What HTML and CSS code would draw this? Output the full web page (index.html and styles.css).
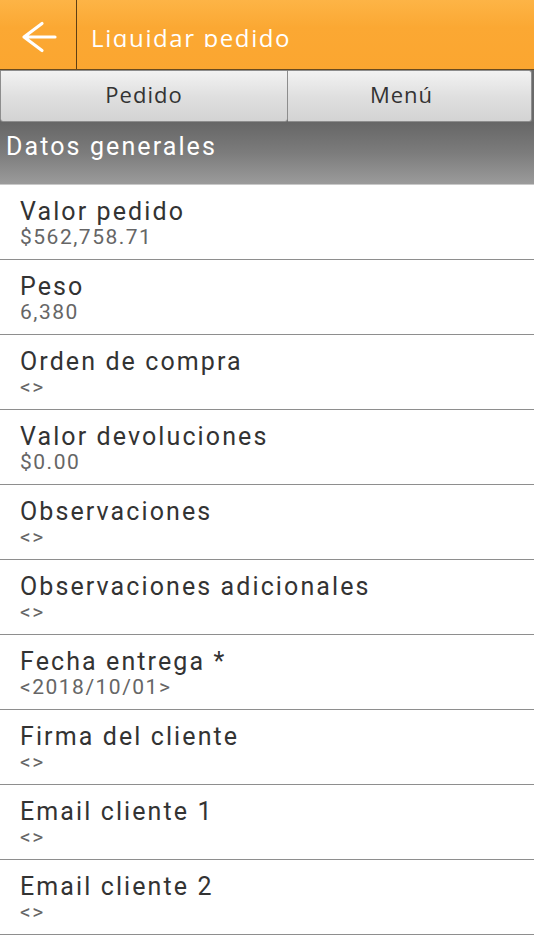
FILE: index.html
```html
<!DOCTYPE html>
<html lang="es">
<head>
    <meta charset="UTF-8">
    <meta name="viewport" content="width=device-width, initial-scale=1.0">
    <title>Liquidar pedido</title>
    <link rel="stylesheet" href="styles.css">
</head>
<body>
    <div class="topbar">
        <div class="back">
            <svg width="37" height="32" viewBox="0 0 37 32">
                <path d="M3 16 H34 M21 2.5 L3 16 L21 29.5" fill="none" stroke="#fff" stroke-width="3.2" stroke-linecap="round" stroke-linejoin="round"/>
            </svg>
        </div>
        <div class="title"><span>Liquidar pedido</span></div>
    </div>

    <div class="tabs">
        <div class="tab">Pedido</div>
        <div class="tab">Menú</div>
    </div>

    <div class="section">Datos generales</div>

    <div class="list">
        <div class="item">
            <div class="label">Valor pedido</div>
            <div class="value">$562,758.71</div>
        </div>
        <div class="item">
            <div class="label">Peso</div>
            <div class="value">6,380</div>
        </div>
        <div class="item">
            <div class="label">Orden de compra</div>
            <div class="value">&lt;&gt;</div>
        </div>
        <div class="item">
            <div class="label">Valor devoluciones</div>
            <div class="value">$0.00</div>
        </div>
        <div class="item">
            <div class="label">Observaciones</div>
            <div class="value">&lt;&gt;</div>
        </div>
        <div class="item">
            <div class="label">Observaciones adicionales</div>
            <div class="value">&lt;&gt;</div>
        </div>
        <div class="item">
            <div class="label">Fecha entrega *</div>
            <div class="value">&lt;2018/10/01&gt;</div>
        </div>
        <div class="item">
            <div class="label">Firma del cliente</div>
            <div class="value">&lt;&gt;</div>
        </div>
        <div class="item">
            <div class="label">Email cliente 1</div>
            <div class="value">&lt;&gt;</div>
        </div>
        <div class="item">
            <div class="label">Email cliente 2</div>
            <div class="value">&lt;&gt;</div>
        </div>
    </div>
</body>
</html>
```

FILE: styles.css
```css
body{
    margin:0;
    background:#fff;
    font-family: Roboto, "Noto Sans", sans-serif;
    overflow:hidden;
}

.topbar{
    display:flex;
    height:69px;
    background: linear-gradient(#fdb446, #fba833 40%, #fba630);
    border-bottom:1px solid #6b4a1c;
}

.back{
    width:77px;
    border-right:1px solid #5e3f14;
    display:flex;
    align-items:center;
    justify-content:center;
    padding:5px 0 0 2px;
    box-sizing:border-box;
}

/* title is cut at the baseline, as in the app */
.title{
    flex:1;
    height:47px;
    overflow:hidden;
    padding-left:14px;
    color:#fff;
    font-family:"Open Sans", sans-serif;
    font-size:24px;
    letter-spacing:1.6px;
}

.title span{
    display:block;
    line-height:33px;
    padding-top:21px;
}

.tabs{
    display:flex;
    height:52px;
    padding-right:2px;
    background:#6a6a6a;
}

.tab{
    flex:1;
    display:flex;
    align-items:center;
    justify-content:center;
    background:linear-gradient(#f2f2f2, #e0e0e0 50%, #d3d3d3);
    border:1px solid #8d8d8d;
    color:#333;
    font-family:"Open Sans", sans-serif;
    font-size:22px;
    letter-spacing:1px;
    padding-bottom:4px;
    box-sizing:border-box;
}

.tab:first-child{
    flex:0 0 288px;
    border-radius:0 0 3px 3px;
}

.tab + .tab{
    border-left:none;
    border-radius:0 3px 3px 0;
    padding-right:16px;
}

.section{
    height:63px;
    box-sizing:border-box;
    padding:9px 0 0 6px;
    background:linear-gradient(#666, #7c7c7c 50%, #9b9b9b);
    border-bottom:1px solid #c9c9c9;
    color:#fff;
    font-size:25px;
    line-height:32px;
    letter-spacing:2.1px;
}

.item{
    padding:13px 20px 11px;
    border-bottom:1px solid #8e8e8e;
}

.label{
    font-size:25px;
    line-height:28px;
    letter-spacing:2.1px;
    color:#333;
}

.value{
    font-size:21px;
    line-height:22px;
    letter-spacing:1.5px;
    color:#666;
}
```
